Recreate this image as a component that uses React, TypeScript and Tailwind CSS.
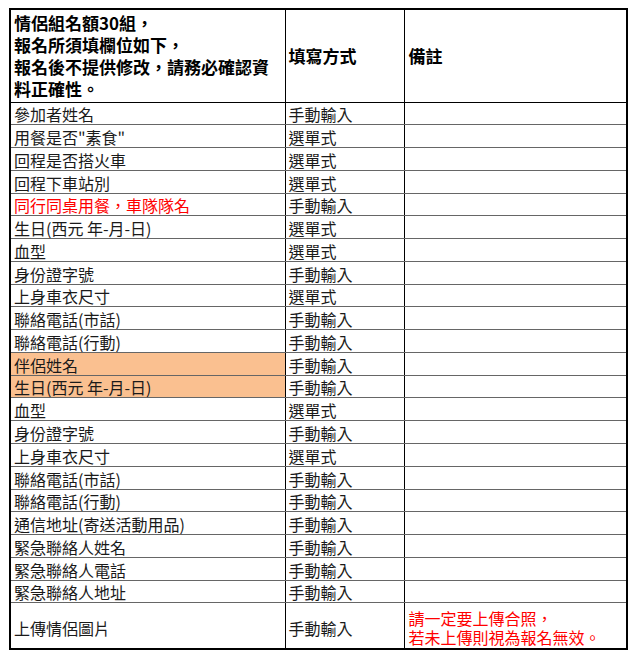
const rows: { label: string; method: string; red?: boolean; orange?: boolean }[] = [
  { label: "參加者姓名", method: "手動輸入" },
  { label: "用餐是否\"素食\"", method: "選單式" },
  { label: "回程是否搭火車", method: "選單式" },
  { label: "回程下車站別", method: "選單式" },
  { label: "同行同桌用餐，車隊隊名", method: "手動輸入", red: true },
  { label: "生日(西元 年-月-日)", method: "選單式" },
  { label: "血型", method: "選單式" },
  { label: "身份證字號", method: "手動輸入" },
  { label: "上身車衣尺寸", method: "選單式" },
  { label: "聯絡電話(市話)", method: "手動輸入" },
  { label: "聯絡電話(行動)", method: "手動輸入" },
  { label: "伴侶姓名", method: "手動輸入", orange: true },
  { label: "生日(西元 年-月-日)", method: "手動輸入", orange: true },
  { label: "血型", method: "選單式" },
  { label: "身份證字號", method: "手動輸入" },
  { label: "上身車衣尺寸", method: "選單式" },
  { label: "聯絡電話(市話)", method: "手動輸入" },
  { label: "聯絡電話(行動)", method: "手動輸入" },
  { label: "通信地址(寄送活動用品)", method: "手動輸入" },
  { label: "緊急聯絡人姓名", method: "手動輸入" },
  { label: "緊急聯絡人電話", method: "手動輸入" },
  { label: "緊急聯絡人地址", method: "手動輸入" },
];

const font = { fontFamily: '"Noto Sans CJK TC", "Liberation Sans", sans-serif' };

export default function App() {
  return (
    <div className="w-[640px] h-[661px] bg-white pl-[9px] pt-[8px]" style={font}>
      <table className="border-collapse border-2 border-black w-[617px] table-fixed text-[16px] leading-[20px] text-[#1a1a1a]">
        <colgroup>
          <col className="w-[275px]" />
          <col className="w-[119px]" />
          <col className="w-[223px]" />
        </colgroup>
        <thead>
          <tr className="h-[93px]">
            <th className="border border-black text-left align-middle font-bold text-[17px] leading-[22px] px-[3px] text-black">
              情侶組名額30組，
              <br />
              報名所須填欄位如下，
              <br />
              報名後不提供修改，請務必確認資
              <br />
              料正確性。
            </th>
            <th className="border border-black text-left align-middle font-bold text-[17px] px-[3px] text-black">
              填寫方式
            </th>
            <th className="border border-black text-left align-middle font-bold text-[17px] px-[4px] text-black">
              備註
            </th>
          </tr>
        </thead>
        <tbody>
          {rows.map((r, i) => (
            <tr key={i} className="h-[22.77px]">
              <td
                className={`border-y border-y-[#666] border-x border-x-black align-bottom px-[3px] whitespace-nowrap ${
                  r.orange ? "bg-[#fac090]" : ""
                } ${r.red ? "text-[#ff0000]" : ""}`}
              >
                {r.label}
              </td>
              <td className="border-y border-y-[#666] border-x border-x-black align-bottom px-[3px] whitespace-nowrap">
                {r.method}
              </td>
              <td className="border-y border-y-[#666] border-x border-x-black"></td>
            </tr>
          ))}
          <tr className="h-[46px]">
            <td className="border border-black align-middle px-[3px] pt-[4px]">上傳情侶圖片</td>
            <td className="border border-black align-middle px-[3px] pt-[4px]">手動輸入</td>
            <td className="border border-black align-middle px-[4px] text-[#ff0000] leading-[19px] pt-[4px]">
              請一定要上傳合照，
              <br />
              若未上傳則視為報名無效。
            </td>
          </tr>
        </tbody>
      </table>
    </div>
  );
}
